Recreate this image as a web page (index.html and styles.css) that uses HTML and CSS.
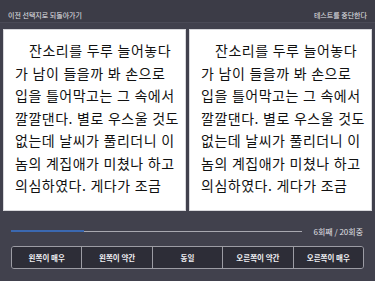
FILE: index.html
```html
<!DOCTYPE html>
<html>

<head>
    <title>Test</title>
    <meta charset="UTF-8" />
    <link rel="stylesheet" href="styles.css">
</head>

<body>
    <div class="top">
        <span>이전 선택지로 되돌아가기</span>
        <span>테스트를 중단한다</span>
    </div>
    <div class="pages">
        <div class="page">
            <p>잔소리를 두루 늘어놓다<br>가 남이 들을까 봐 손으로<br>입을 틀어막고는 그 속에서<br>깔깔댄다. 별로 우스울 것도<br>없는데 날씨가 풀리더니 이<br>놈의 계집애가 미쳤나 하고<br>의심하였다. 게다가 조금</p>
        </div>
        <div class="page">
            <p>잔소리를 두루 늘어놓다<br>가 남이 들을까 봐 손으로<br>입을 틀어막고는 그 속에서<br>깔깔댄다. 별로 우스울 것도<br>없는데 날씨가 풀리더니 이<br>놈의 계집애가 미쳤나 하고<br>의심하였다. 게다가 조금</p>
        </div>
    </div>
    <div class="progress">
        <div class="bar"><div class="fill" style="width: 25%"></div></div>
        <span class="count">6회째 / 20회중</span>
    </div>
    <div class="choices">
        <button>왼쪽이 매우</button>
        <button>왼쪽이 약간</button>
        <button>동일</button>
        <button>오른쪽이 약간</button>
        <button>오른쪽이 매우</button>
    </div>
</body>

</html>
```
FILE: styles.css
```css
body {
    margin: 0;
    background: #41414d;
    font-family: "Noto Sans CJK KR", "Noto Sans", sans-serif;
    color: #e6e6ea;
}

.top {
    height: 23px;
    padding: 0 8px;
    display: flex;
    justify-content: space-between;
    align-items: center;
    padding-top: 7px;
    box-sizing: border-box;
    font-size: 7px;
    background: #3c3c47;
    border-bottom: 1px solid #4a4a56;
}

.pages {
    display: flex;
    gap: 3px;
    padding: 6px 3px 0 3px;
}

.page {
    flex: 1;
    height: 182px;
    background: #fff;
    box-sizing: border-box;
    border: 1px solid #d8d8dc;
    padding: 9px 0 0 11px;
    overflow: hidden;
}

.page p {
    margin: 0;
    color: #111;
    font-size: 14px;
    line-height: 22.5px;
    white-space: nowrap;
    letter-spacing: 0.5px;
    word-spacing: 0.5px;
    text-indent: 14px;
}

.progress {
    display: flex;
    align-items: center;
    padding: 0 12px 0 11px;
    margin-top: 13px;
    height: 14px;
}

.bar {
    flex: 1;
    height: 1px;
    background: #a8a8b0;
}

.fill {
    height: 2px;
    margin-top: -0.5px;
    background: #3b68b0;
}

.count {
    margin-left: 12px;
    font-size: 8px;
    color: #e0e0e6;
}

.choices {
    display: flex;
    margin: 8px 11px 0 11px;
    border: 1px solid #9c9ca4;
    border-radius: 3px;
    overflow: hidden;
}

.choices button {
    flex: 1;
    height: 21px;
    padding: 0;
    border: 0;
    border-left: 1px solid #9c9ca4;
    background: #2d2d37;
    color: #f0f0f4;
    font-family: "Noto Sans CJK KR", sans-serif;
    font-size: 7.5px;
    font-weight: bold;
}

.choices button:first-child {
    border-left: 0;
}
```
